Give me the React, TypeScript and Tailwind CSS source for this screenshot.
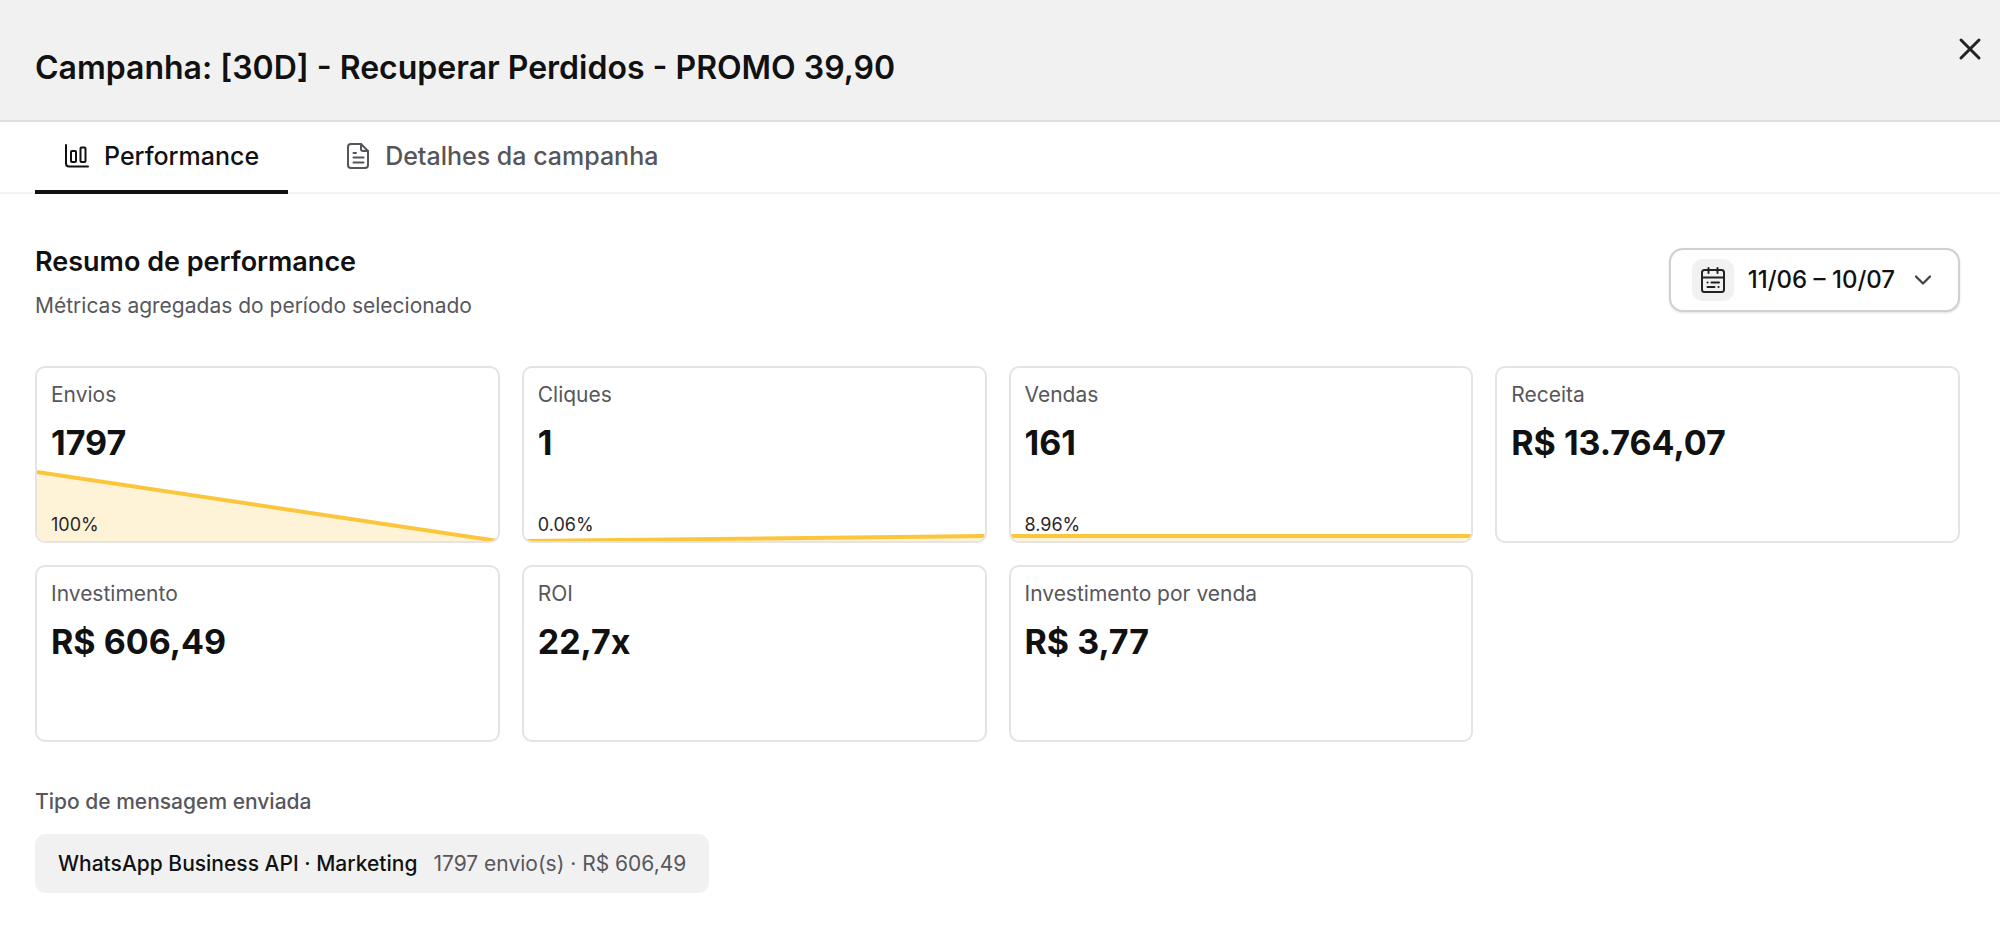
import React, { useState } from "react";
import { ChevronDown, X } from "lucide-react";

interface Trend {
  from: number;
  to: number;
}

interface Metric {
  label: string;
  value: string;
  percent?: string;
  trend?: Trend;
}

// trend values are heights above the card's bottom edge
const metrics: Metric[] = [
  { label: "Envios", value: "1797", percent: "100%", trend: { from: 69, to: 0 } },
  { label: "Cliques", value: "1", percent: "0.06%", trend: { from: 0, to: 5 } },
  { label: "Vendas", value: "161", percent: "8.96%", trend: { from: 5, to: 5 } },
  { label: "Receita", value: "R$ 13.764,07" },
  { label: "Investimento", value: "R$ 606,49" },
  { label: "ROI", value: "22,7x" },
  { label: "Investimento por venda", value: "R$ 3,77" },
];

const TREND_HEIGHT = 80;

function ChartIcon() {
  return (
    <svg
      viewBox="0 0 26 26"
      className="size-[26px]"
      fill="none"
      stroke="currentColor"
      strokeWidth="2"
      strokeLinecap="round"
      strokeLinejoin="round"
      aria-hidden="true"
    >
      <path d="M2 2v18.5a3 3 0 0 0 3 3h19" />
      <rect x="7" y="8" width="5" height="11" rx="1" />
      <rect x="16.5" y="4.5" width="5" height="14.5" rx="1" />
    </svg>
  );
}

function DocumentIcon() {
  return (
    <svg
      viewBox="0 0 26 28"
      className="h-7 w-[26px]"
      fill="none"
      stroke="currentColor"
      strokeWidth="2"
      strokeLinecap="round"
      strokeLinejoin="round"
      aria-hidden="true"
    >
      <path d="M16 2H6a3 3 0 0 0-3 3v18a3 3 0 0 0 3 3h14a3 3 0 0 0 3-3V9Z" />
      <path d="M16 2v5a2 2 0 0 0 2 2h5" />
      <path d="M8.500 11h2.500M8.500 15.500h10M8.500 20.500h10" />
    </svg>
  );
}

function CalendarIcon() {
  return (
    <svg
      viewBox="0 0 26 28"
      className="h-7 w-[26px]"
      fill="none"
      stroke="currentColor"
      strokeWidth="2"
      strokeLinecap="round"
      strokeLinejoin="round"
      aria-hidden="true"
    >
      <rect x="2" y="4" width="22" height="22" rx="2.5" />
      <path d="M2 11.5h22M8.5 2v5M17.5 2v5" />
      <path d="M7.500 16.500h.1M11.500 16.500h7.500M7.500 21h7M18.500 21h.1" />
    </svg>
  );
}

function TrendArea({ from, to }: Trend) {
  const y1 = TREND_HEIGHT - from;
  const y2 = TREND_HEIGHT - to;

  return (
    <svg
      viewBox={`0 0 100 ${TREND_HEIGHT}`}
      preserveAspectRatio="none"
      className="absolute inset-x-0 bottom-0 h-20 w-full"
      aria-hidden="true"
    >
      <polygon
        points={`0,${y1} 100,${y2} 100,${TREND_HEIGHT} 0,${TREND_HEIGHT}`}
        fill="#fef3d7"
      />
      <line
        x1="0"
        y1={y1}
        x2="100"
        y2={y2}
        stroke="#fcc63c"
        strokeWidth="4"
        vectorEffect="non-scaling-stroke"
      />
    </svg>
  );
}

function MetricCard({ label, value, percent, trend }: Metric) {
  return (
    <div className="relative flex h-[177px] flex-col overflow-hidden rounded-[10px] border-2 border-[#e4e4e4] bg-white px-[14px] pt-[11px] pb-0.5">
      {trend && <TrendArea from={trend.from} to={trend.to} />}
      <p className="relative text-[21px] leading-8 text-[#57575c]">{label}</p>
      <p className="relative mt-3 text-[34px] leading-10 font-bold text-[#111111]">
        {value}
      </p>
      {percent && (
        <p className="relative mt-auto text-lg text-[#27272a]">{percent}</p>
      )}
    </div>
  );
}

const tabs = [
  { id: "performance", label: "Performance", icon: <ChartIcon /> },
  { id: "details", label: "Detalhes da campanha", icon: <DocumentIcon /> },
];

export default function App() {
  const [activeTab, setActiveTab] = useState("performance");

  return (
    <div className="min-h-screen bg-white font-['Inter',sans-serif] text-[#111111]">
      <header className="flex items-start justify-between border-b-2 border-[#dfdfdf] bg-[#f1f1f1] pt-[31px] pr-3 pb-7 pl-[35px]">
        <h1 className="mt-[13px] text-[32px] leading-12 font-semibold">
          Campanha: [30D] - Recuperar Perdidos - PROMO 39,90
        </h1>
        <button type="button" aria-label="Fechar" className="text-[#222222]">
          <X className="size-9" strokeWidth={2} />
        </button>
      </header>

      <div
        role="tablist"
        className="flex gap-7 border-b-2 border-[#f4f4f5] px-[35px]"
      >
        {tabs.map((tab) => (
          <button
            key={tab.id}
            type="button"
            role="tab"
            aria-selected={activeTab === tab.id}
            onClick={() => setActiveTab(tab.id)}
            className={
              activeTab === tab.id
                ? "-mb-0.5 flex items-center gap-[14px] border-b-4 border-[#111111] px-[29px] py-4 text-[25px] leading-9 font-medium text-[#111111]"
                : "-mb-0.5 flex items-center gap-[14px] border-b-4 border-transparent px-[29px] py-4 text-[25px] leading-9 font-medium text-[#55555a]"
            }
          >
            {tab.icon}
            {tab.label}
          </button>
        ))}
      </div>

      <main className="pt-[54px] pr-10 pb-9 pl-[35px]">
        <div className="flex items-start justify-between">
          <div>
            <h2 className="text-[27px] leading-7 font-semibold">
              Resumo de performance
            </h2>
            <p className="mt-[14px] text-[21px] leading-8 text-[#57575c]">
              Métricas agregadas do período selecionado
            </p>
          </div>
          <button
            type="button"
            className="flex h-16 items-center gap-[14px] rounded-[14px] border-2 border-[#d0d0d0] bg-white px-[21px] text-2xl font-medium shadow-sm"
          >
            <span className="flex size-[42px] items-center justify-center rounded-[10px] bg-[#f1f1f1] text-[#222222]">
              <CalendarIcon />
            </span>
            11/06 – 10/07
            <ChevronDown className="size-7 text-[#444444]" strokeWidth={2} />
          </button>
        </div>

        <section className="mt-11 grid grid-cols-4 gap-[22px]">
          {metrics.map((metric) => (
            <MetricCard key={metric.label} {...metric} />
          ))}
        </section>

        <section className="mt-11">
          <h3 className="text-[21px] leading-8 font-medium text-[#57575c]">
            Tipo de mensagem enviada
          </h3>
          <div className="mt-4 inline-flex h-[59px] items-center gap-4 rounded-[10px] bg-[#f1f1f1] px-[23px] text-[21px]">
            <span className="font-medium">WhatsApp Business API · Marketing</span>
            <span className="text-[#57575c]">1797 envio(s) · R$ 606,49</span>
          </div>
        </section>
      </main>
    </div>
  );
}
